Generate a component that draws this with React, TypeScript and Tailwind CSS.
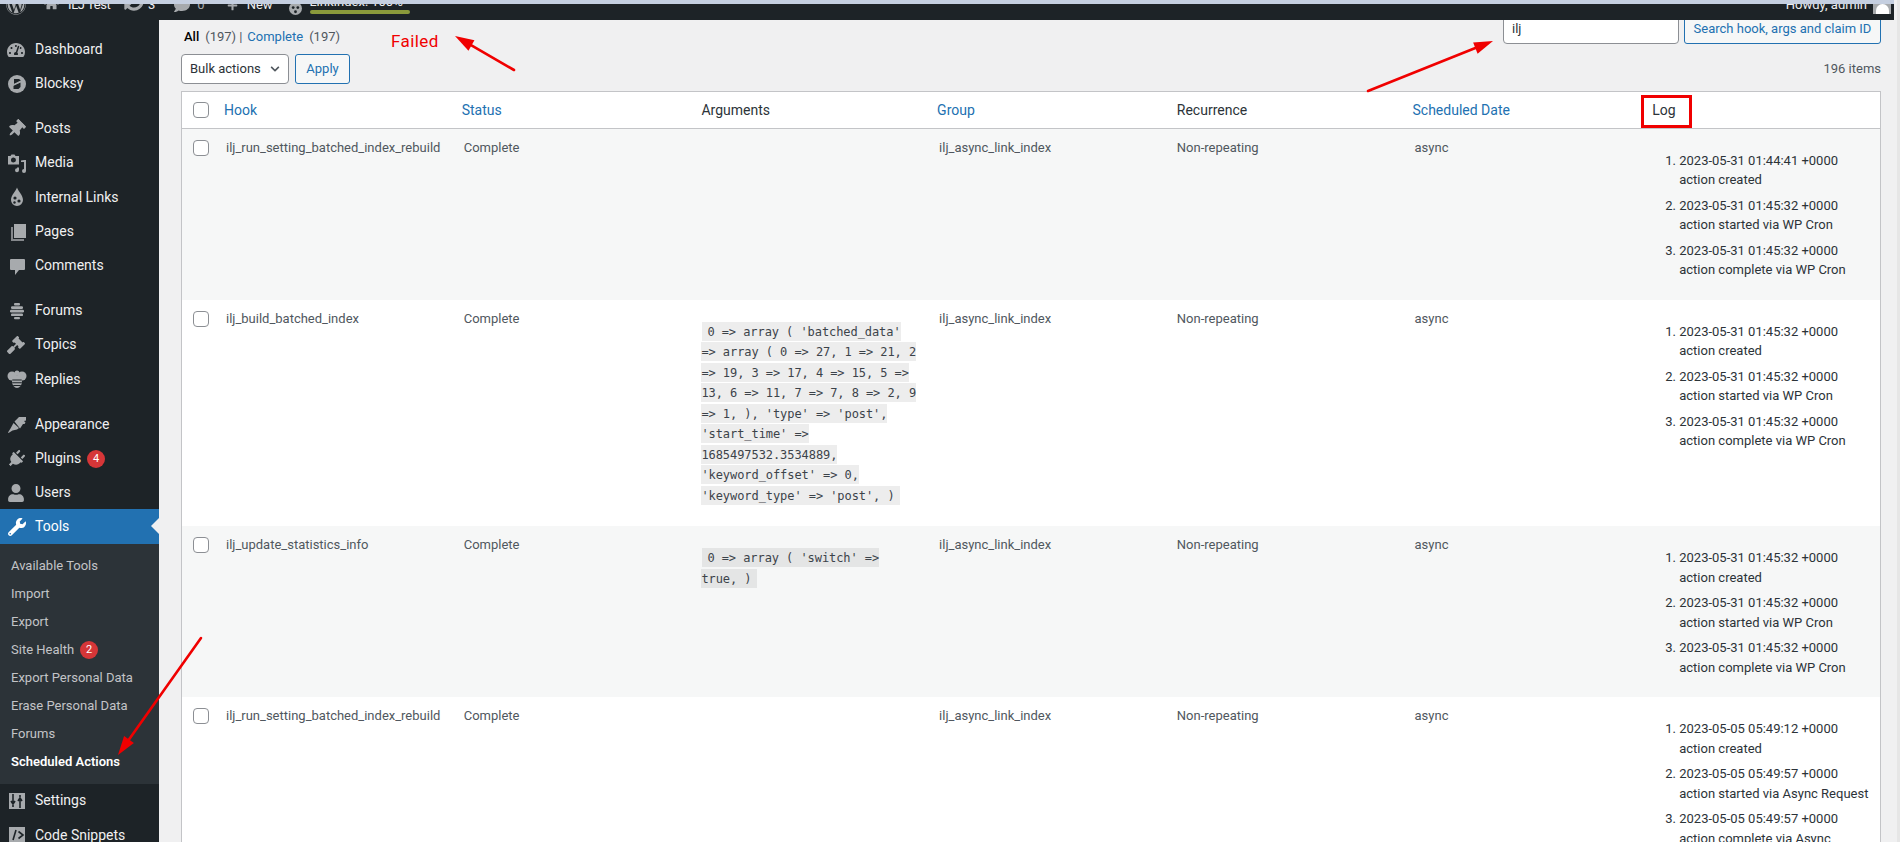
import React from "react";
import {
  FaWordpress, FaHome, FaSyncAlt, FaComment, FaPlus, FaTachometerAlt, FaThumbtack, FaGavel,
  FaPlug, FaUser, FaWrench, FaChevronDown,
} from "react-icons/fa";

const Blocksy = () => (
  <svg viewBox="0 0 20 20" className="w-[20px] h-[20px]" fill="currentColor">
    <circle cx="10" cy="10" r="9" />
    <path d="M7 5h5l2 1.500L7 10zM6.500 11.500 13.500 8.500 V13l-2 2H6.500z" fill="#1d2327" />
    <path d="M6 10.500 14 6.500v1.400l-8 4z" fill="currentColor" />
  </svg>
);
const Media = () => (
  <svg viewBox="0 0 20 20" className="w-[20px] h-[20px]" fill="currentColor">
    <path fillRule="evenodd" d="M1 3h2.500l1-1.500h3l1 1.500H12v8.500H1zM6.500 4.500a2.500 2.500 0 1 0 0 5 2.500 2.500 0 0 0 0-5z" />
    <path d="M17 7h2v11a2 2 0 1 1-2-2V9h-3V7.500zM10 14.500h2V17a2 2 0 1 1-2-1.800z" />
  </svg>
);
const Drop = () => (
  <svg viewBox="0 0 20 20" className="w-[20px] h-[20px]" fill="currentColor">
    <path d="M10 0.500C11 4 16 8 16 13a6 6 0 0 1-12 0C4 8 9 4 10 0.500z" />
    <circle cx="8" cy="11" r="1.600" fill="#1d2327" />
    <circle cx="12" cy="14" r="1.600" fill="#1d2327" />
    <circle cx="7.500" cy="15.500" r="1.200" fill="#1d2327" />
  </svg>
);
const Pages = () => (
  <svg viewBox="0 0 20 20" className="w-[20px] h-[20px]" fill="currentColor">
    <path d="M7 2h12v14H7z" />
    <path d="M4 5h2v12h11v2H4z" opacity="0.75" />
  </svg>
);
const Bubble = () => (
  <svg viewBox="0 0 20 20" className="w-[20px] h-[20px]" fill="currentColor">
    <path d="M4 3h13a1 1 0 0 1 1 1v9a1 1 0 0 1-1 1h-5l-4 5v-5H4a1 1 0 0 1-1-1V4a1 1 0 0 1 1-1z" />
  </svg>
);
const Hive = () => (
  <svg viewBox="0 0 20 20" className="w-[20px] h-[20px]" fill="currentColor">
    <rect x="7" y="2" width="6" height="2.500" rx="1" />
    <rect x="4" y="5.200" width="12" height="2.700" rx="1.200" />
    <rect x="3" y="8.800" width="14" height="2.700" rx="1.200" />
    <rect x="4" y="12.400" width="12" height="2.700" rx="1.200" />
    <rect x="7" y="16" width="6" height="2.200" rx="1" />
  </svg>
);
const Bee = () => (
  <svg viewBox="0 0 20 20" className="w-[20px] h-[20px]" fill="currentColor">
    <circle cx="5" cy="7" r="4.500" />
    <circle cx="15" cy="7" r="4.500" />
    <ellipse cx="10" cy="12.500" rx="5" ry="6.500" />
    <circle cx="10" cy="4" r="2.500" />
    <path d="M5.300 10.500h9.400v1.100H5.300zM5.200 13.200h9.600v1.100H5.200zM6.200 16h7.600v1H6.200z" fill="#1d2327" />
  </svg>
);
const Brush = () => (
  <svg viewBox="0 0 20 20" className="w-[20px] h-[20px]" fill="currentColor">
    <path d="M7.500 7.500 12 3h7v3.500l-2 .5 1.500 1.500-1 1.500-1.500 0L13 14.500z" />
    <path d="M6.500 9 12 14l-2 1.500-4.500 1L1.500 19 1 18.500 3.500 14.500z" />
  </svg>
);
const Sliders = () => (
  <svg viewBox="0 0 20 20" className="w-[20px] h-[20px]">
    <rect x="2" y="2" width="16" height="16" fill="#a7aaad" />
    <path d="M6 3v9M4 10l2 3 2-3M6 14v2M13 17V8M11 10l2-3 2 3M13 6V4" stroke="#1d2327" strokeWidth="1.600" fill="none" />
  </svg>
);
const Code = () => (
  <svg viewBox="0 0 20 20" className="w-[20px] h-[20px]">
    <rect x="2" y="2" width="16" height="16" fill="#a7aaad" />
    <path d="M9 5 6 15M11.500 6.500 16 10l-4.500 3.500" stroke="#1d2327" strokeWidth="1.600" fill="none" />
  </svg>
);
const PinIcon = () => <FaThumbtack className="w-[18px] h-[18px] rotate-45" />;
const PlugIcon = () => <FaPlug className="w-[18px] h-[18px] rotate-45" />;
const I = (C: any) => () => <C className="w-[18px] h-[18px]" />;

type Item = { label: string; icon: React.FC; sep?: boolean; badge?: string };
const topMenu: Item[] = [
  { label: "Dashboard", icon: I(FaTachometerAlt) },
  { label: "Blocksy", icon: Blocksy },
  { label: "Posts", icon: PinIcon, sep: true },
  { label: "Media", icon: Media },
  { label: "Internal Links", icon: Drop },
  { label: "Pages", icon: Pages },
  { label: "Comments", icon: Bubble },
  { label: "Forums", icon: Hive, sep: true },
  { label: "Topics", icon: I(FaGavel) },
  { label: "Replies", icon: Bee },
  { label: "Appearance", icon: Brush, sep: true },
  { label: "Plugins", icon: PlugIcon, badge: "4" },
  { label: "Users", icon: I(FaUser) },
];
const sub = ["Available Tools", "Import", "Export", "Site Health", "Export Personal Data", "Erase Personal Data", "Forums", "Scheduled Actions"];

function Badge({ n }: { n: string }) {
  return (
    <span className="ml-[6px] w-[18px] h-[18px] rounded-full bg-[#d63638] text-white text-[11px] leading-[18px] text-center inline-block">{n}</span>
  );
}

function MenuRow({ it }: { it: Item }) {
  const Ic = it.icon;
  return (
    <div className={`h-[34.2px] pt-[1px] flex items-center text-[14px] text-[#f0f0f1] ${it.sep ? "mt-[11px]" : ""}`}>
      <span className="w-[35px] pl-[7px] flex items-center justify-start text-[#a7aaad]"><Ic /></span>
      <span>{it.label}</span>
      {it.badge && <Badge n={it.badge} />}
    </div>
  );
}

function Sidebar() {
  return (
    <aside className="w-[159px] shrink-0 bg-[#1d2327] pt-[12px] overflow-hidden">
      {topMenu.map((it) => <MenuRow key={it.label} it={it} />)}
      <div className="relative h-[34.2px] bg-[#2271b1] flex items-center text-[14px] text-white">
        <span className="w-[35px] pl-[8px] flex items-center"><FaWrench className="w-[18px] h-[18px]" /></span>
        <span>Tools</span>
        <span className="absolute right-0 top-[9px] w-0 h-0 border-y-[8px] border-y-transparent border-r-[8px] border-r-[#f0f0f1]" />
      </div>
      <div className="bg-[#2c3338] py-[8px] text-[13px] text-[#c3c4c7]">
        {sub.map((s) => (
          <div key={s} className={`h-[28px] pl-[11px] flex items-center ${s === "Scheduled Actions" ? "text-white font-semibold" : ""}`}>
            {s}
            {s === "Site Health" && <Badge n="2" />}
          </div>
        ))}
      </div>
      <MenuRow it={{ label: "Settings", icon: Sliders }} />
      <MenuRow it={{ label: "Code Snippets", icon: Code }} />
    </aside>
  );
}

function TopBar() {
  return (
    <header className="relative z-10 h-[20px] mr-[3px] bg-[#1d2327] border-t-[4px] border-[#c5cfe0] overflow-hidden text-[13px] text-[#f0f0f1]">
      <div className="-mt-[15px] h-[32px] flex items-center text-[#a7aaad]">
        <FaWordpress className="ml-[6px] w-[20px] h-[20px]" />
        <FaHome className="ml-[18px] -mt-[3px] w-[15px] h-[15px]" />
        <span className="ml-[9px] w-[46px] tracking-[-0.4px] text-[#f0f0f1]">ILJ Test</span>
        <FaSyncAlt className="ml-[10px] -mt-[8px] w-[20px] h-[20px]" />
        <span className="ml-[4px] text-[#f0f0f1]">3</span>
        <FaComment className="ml-[19px] w-[16px] h-[16px]" />
        <span className="ml-[7px]">0</span>
        <FaPlus className="ml-[22px] w-[11px] h-[11px]" />
        <span className="ml-[9px] text-[#f0f0f1]">New</span>
        <svg viewBox="0 0 14 14" className="ml-[16px] mt-[6px] w-[13px] h-[13px]" fill="currentColor">
          <circle cx="7" cy="7" r="7" />
          <circle cx="4.500" cy="6" r="1.500" fill="#1d2327" />
          <circle cx="9.500" cy="6" r="1.500" fill="#1d2327" />
          <circle cx="7" cy="10.500" r="1.500" fill="#1d2327" />
        </svg>
        <div className="ml-[8px] h-[18px] w-[100px] flex flex-col">
          <span className="h-[12px] leading-[12px] text-[#f0f0f1]">LinkIndex: 100%</span>
          <span className="mt-[2px] h-[4px] rounded-[2px] bg-[#8a9a3b]" />
        </div>
        <div className="ml-auto flex items-center text-[#f0f0f1]">
          <span>Howdy, admin</span>
          <span className="ml-[6px] mr-[3px] w-[18px] h-[18px] bg-[#a7aaad] flex items-end justify-center overflow-hidden">
            <span className="w-[13px] h-[10px] rounded-t-full bg-white" />
          </span>
        </div>
      </div>
    </header>
  );
}

const Th = ({ children, link }: { children: React.ReactNode; link?: boolean }) => (
  <th className={`font-normal text-left text-[14px] pt-[1px] ${link ? "pl-[8px] text-[#2271b1]" : "pl-[10px] text-[#2c3338]"}`}>{children}</th>
);

const CheckBox = () => (
  <input type="checkbox" readOnly className="appearance-none block w-[16px] h-[16px] rounded-[4px] border border-[#8c8f94] bg-white" />
);

type Row = { hook: string; args?: string; log: [string, string][] };
const rows: Row[] = [
  {
    hook: "ilj_run_setting_batched_index_rebuild",
    log: [["2023-05-31 01:44:41 +0000", "action created"], ["2023-05-31 01:45:32 +0000", "action started via WP Cron"], ["2023-05-31 01:45:32 +0000", "action complete via WP Cron"]],
  },
  {
    hook: "ilj_build_batched_index",
    args: "0 => array ( 'batched_data' => array ( 0 => 27, 1 => 21, 2 => 19, 3 => 17, 4 => 15, 5 => 13, 6 => 11, 7 => 7, 8 => 2, 9 => 1, ), 'type' => 'post', 'start_time' => 1685497532.3534889, 'keyword_offset' => 0, 'keyword_type' => 'post', )",
    log: [["2023-05-31 01:45:32 +0000", "action created"], ["2023-05-31 01:45:32 +0000", "action started via WP Cron"], ["2023-05-31 01:45:32 +0000", "action complete via WP Cron"]],
  },
  {
    hook: "ilj_update_statistics_info",
    args: "0 => array ( 'switch' => true, )",
    log: [["2023-05-31 01:45:32 +0000", "action created"], ["2023-05-31 01:45:32 +0000", "action started via WP Cron"], ["2023-05-31 01:45:32 +0000", "action complete via WP Cron"]],
  },
  {
    hook: "ilj_run_setting_batched_index_rebuild",
    log: [["2023-05-05 05:49:12 +0000", "action created"], ["2023-05-05 05:49:57 +0000", "action started via Async Request"], ["2023-05-05 05:49:57 +0000", "action complete via Async Request"]],
  },
];

function Arrow({ x1, y1, x2, y2 }: { x1: number; y1: number; x2: number; y2: number }) {
  const a = Math.atan2(y2 - y1, x2 - x1);
  const L = 19, W = 6;
  const bx = x2 - L * Math.cos(a), by = y2 - L * Math.sin(a);
  const nx = -Math.sin(a) * W, ny = Math.cos(a) * W;
  return (
    <g>
      <line x1={x1} y1={y1} x2={bx} y2={by} stroke="#f00000" strokeWidth="2.600" strokeLinecap="round" />
      <polygon points={`${x2},${y2} ${bx + nx},${by + ny} ${bx - nx},${by - ny}`} fill="#f00000" />
    </g>
  );
}

const Td = ({ children }: { children?: React.ReactNode }) => (
  <td className="align-top pt-[9px] pb-[7px] px-[10px]">{children}</td>
);

export default function App() {
  return (
    <div className="relative w-[1900px] h-[842px] overflow-hidden bg-[#f0f0f1] border-r-[3px] border-[#e6e6e6] font-['Roboto',sans-serif] text-[13px] leading-[19.5px] text-[#50575e]">
      <TopBar />
      <div className="flex h-[822px]">
        <Sidebar />
        <main className="flex-1 min-w-0 pl-[22px] pr-[16px] overflow-hidden">
          <div className="h-[24px] flex justify-between items-start">
            <div className="pt-[7px] pl-[3px] flex">
              <span className="text-black font-medium">All</span>
              <span className="ml-[6px]">(197)</span>
              <span className="ml-[3px]">|</span>
              <span className="ml-[5px] text-[#2271b1]">Complete</span>
              <span className="ml-[6px]">(197)</span>
            </div>
            <div className="-mt-[6px] flex gap-[5px]">
              <div className="w-[176px] h-[30px] bg-white border border-[#8c8f94] rounded-[4px] pl-[8px] flex items-center text-[#2c3338]">ilj</div>
              <div className="w-[197px] h-[30px] bg-[#f6f7f7] border border-[#2271b1] rounded-[3px] flex items-center justify-center text-[#2271b1]">Search hook, args and claim ID</div>
            </div>
          </div>
          <div className="mt-[10px] h-[30px] flex items-center">
            <div className="w-[108px] h-[30px] bg-white border border-[#8c8f94] rounded-[4px] pl-[8px] pr-[8px] flex items-center justify-between text-[#2c3338]">
              <span>Bulk actions</span>
              <FaChevronDown className="w-[10px] h-[10px] text-[#50575e]" />
            </div>
            <div className="ml-[6px] w-[55px] h-[30px] bg-[#f6f7f7] border border-[#2271b1] rounded-[3px] flex items-center justify-center text-[#2271b1]">Apply</div>
            <span className="ml-auto">196 items</span>
          </div>
          <div className="mt-[7px] border border-[#c3c4c7] border-b-0 bg-white">
            <table className="w-full table-fixed border-collapse">
              <thead>
                <tr className="h-[36px] border-b border-[#c3c4c7]">
                  <th className="w-[34px] pl-[11px] font-normal"><CheckBox /></th>
                  <Th link>Hook</Th>
                  <Th link>Status</Th>
                  <Th>Arguments</Th>
                  <Th link>Group</Th>
                  <Th>Recurrence</Th>
                  <Th link>Scheduled Date</Th>
                  <Th>Log</Th>
                </tr>
              </thead>
              <tbody>
                {rows.map((r, i) => (
                  <tr key={i} className={i % 2 === 0 ? "bg-[#f6f7f7]" : "bg-white"}>
                    <td className="align-top pl-[11px] pt-[11px]"><CheckBox /></td>
                    <Td>{r.hook}</Td>
                    <Td>Complete</Td>
                    <Td>
                      {r.args && (
                        <p className="my-[13px] leading-[20.5px]">
                          <code className="mx-[1px] pt-[3px] pb-[2px] px-[5px] bg-[rgba(0,0,0,0.07)] font-['DejaVu_Sans_Mono',monospace] text-[12px] tracking-[-0.07px] text-[#3c434a]">{r.args}</code>
                        </p>
                      )}
                    </Td>
                    <Td>ilj_async_link_index</Td>
                    <Td>Non-repeating</Td>
                    <Td>async</Td>
                    <Td>
                      <ol className="my-[13px] ml-[27px] list-decimal text-[#2c3338]">
                        {r.log.map(([a, b], j) => (
                          <li key={j} className="mb-[6px] last:mb-0">
                            {a}<br />{b}
                          </li>
                        ))}
                      </ol>
                    </Td>
                  </tr>
                ))}
              </tbody>
            </table>
          </div>
        </main>
      </div>
      <span className="absolute left-[391px] top-[29px] text-[17px] leading-[24px] tracking-[0.4px] text-[#f00000]">Failed</span>
      <div className="absolute left-[1641px] top-[95px] w-[51px] h-[33px] border-[3px] border-[#f00000]" />
      <svg className="absolute left-0 top-0 w-[1900px] h-[842px] pointer-events-none" viewBox="0 0 1900 842">
        <Arrow x1={514} y1={70} x2={455} y2={36} />
        <Arrow x1={1368} y1={91} x2={1493} y2={41} />
        <Arrow x1={201} y1={638} x2={118} y2={755} />
      </svg>
    </div>
  );
}
